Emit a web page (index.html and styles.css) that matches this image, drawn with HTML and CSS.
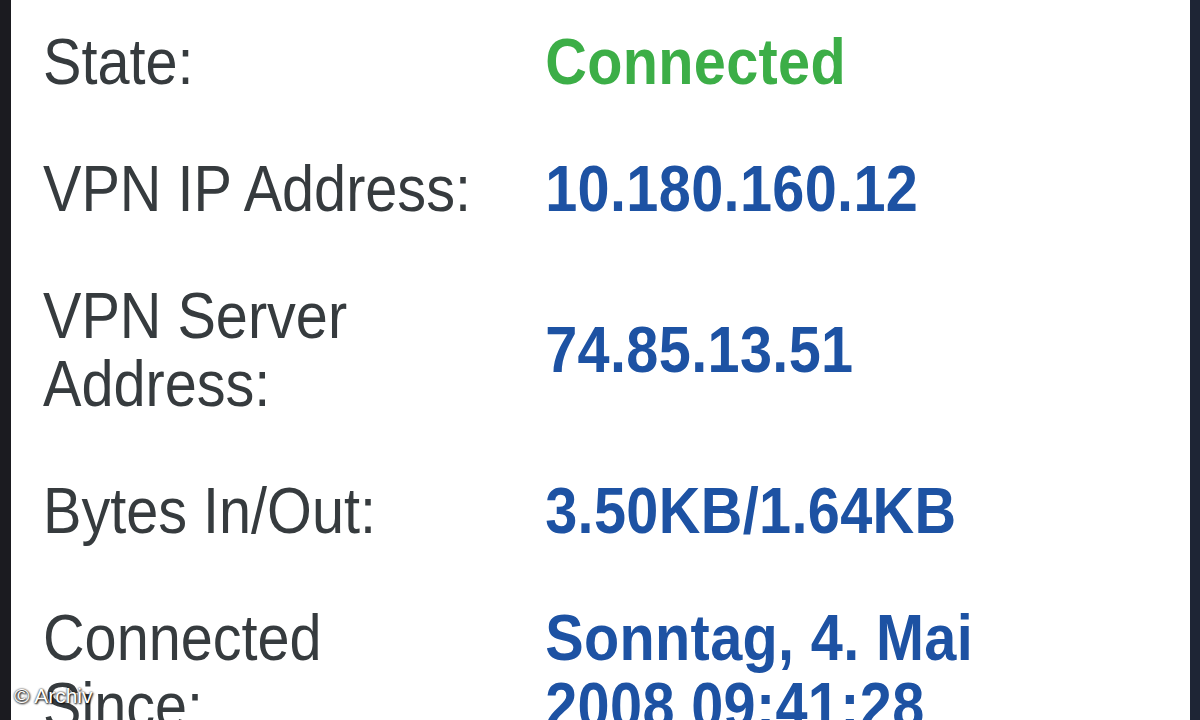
FILE: index.html
```html
<!DOCTYPE html>
<html>
    <head>
        <meta charset = utf-8>
        <title>VPN Status</title>
        <link rel="stylesheet" href="styles.css">
    </head>

    <body>
        <div class = panel>
            <div class = table>
                <div class = row>
                    <div class = label>State:</div>
                    <div class = "value ok">Connected</div>
                </div>
                <div class = row>
                    <div class = label>VPN IP Address:</div>
                    <div class = value>10.180.160.12</div>
                </div>
                <div class = row>
                    <div class = label>VPN Server Address:</div>
                    <div class = value>74.85.13.51</div>
                </div>
                <div class = row>
                    <div class = label>Bytes In/Out:</div>
                    <div class = value>3.50KB/1.64KB</div>
                </div>
                <div class = row>
                    <div class = label>Connected Since:</div>
                    <div class = value>Sonntag, 4. Mai 2008 09:41:28</div>
                </div>
            </div>
            <div class = credit>© Archiv</div>
        </div>
    </body>
</html>
```

FILE: styles.css
```css
html {
    background: #fff;
    font-family: "Liberation Sans", Arial, sans-serif;
}

body {
    margin: 0;
    height: 720px;
    overflow: hidden
}

.panel {
    position: relative;
    box-sizing: border-box;
    height: 720px;
    overflow: hidden;
    padding-left: 32px;
    border-left: 11px solid #1b1b20;
    border-right: 10px solid #1e2535;
    background: #fff
}

.table {
    transform: scaleX(0.9);
    transform-origin: left top;
    font-size: 64px;
    line-height: 68px
}

.row {
    display: grid;
    grid-template-columns: 490px 540px;
    column-gap: 68px;
    align-items: center;
    padding: 28px 0 31px
}

.label {color: #363b3e}

.value {
    color: #1d52a3;
    font-weight: bold;
    letter-spacing: 0.4px
}

.ok {color: #3cae47}

.credit {
    position: absolute;
    left: 3px;
    bottom: 12px;
    color: #fff;
    font-size: 21px;
    text-shadow: 0 0 2px #000, 1px 1px 2px #000
}
```
